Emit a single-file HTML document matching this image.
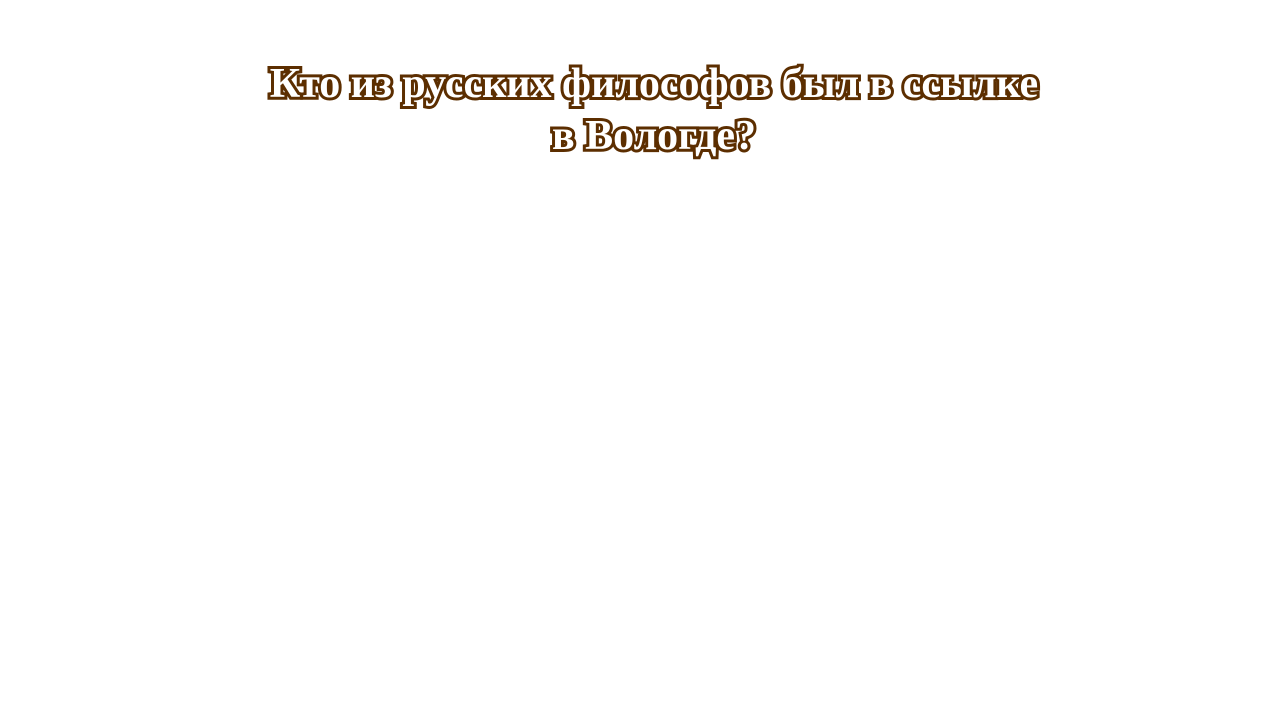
<!DOCTYPE html>
<html><head><meta charset="utf-8"><style>
html,body{margin:0;padding:0;background:#fff;width:1280px;height:720px;overflow:hidden}
h1{position:absolute;left:0;top:58px;width:1308px;margin:0;text-align:center;
font-family:"Liberation Serif",serif;font-weight:bold;font-size:42px;line-height:52px;
color:#fff;-webkit-text-stroke:6px #5c2e00;paint-order:stroke fill;letter-spacing:0px}
</style></head><body>
<h1>Кто из русских философов был в ссылке<br>в Вологде?</h1>
</body></html>
